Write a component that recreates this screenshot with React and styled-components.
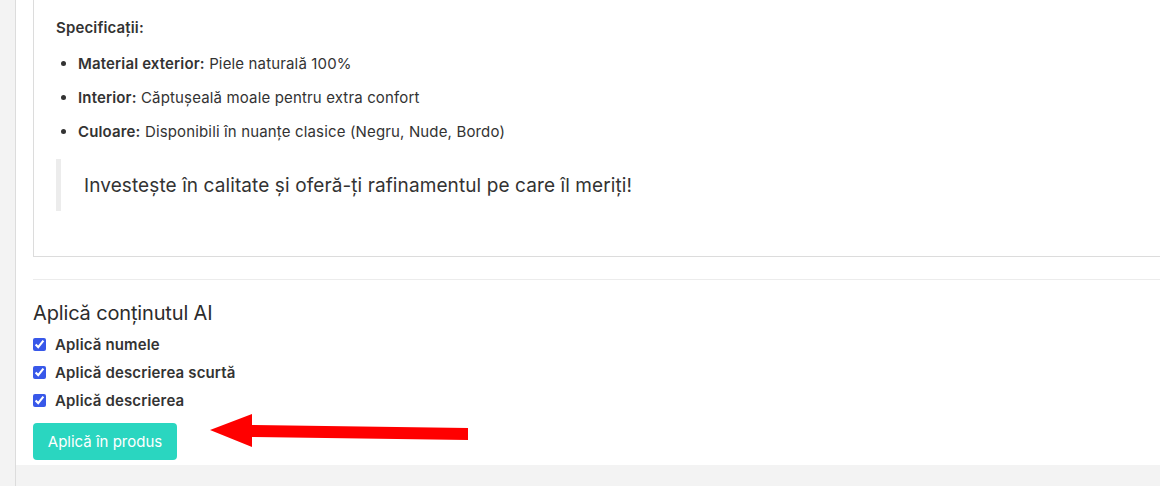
import React from "react";
import styled, { createGlobalStyle } from "styled-components";

const Global = createGlobalStyle`
  html, body { margin: 0; padding: 0; background: #f3f3f3; }
  body { font-family: Inter, "Noto Sans", sans-serif; color: #3c3c3c; }
  * { box-sizing: border-box; }
`;

const Page = styled.div`
  display: flex;
  width: 1160px;
  height: 486px;
  overflow: hidden;
  background: #f3f3f3;
`;

const Strip = styled.div`
  width: 16px;
  flex: none;
  background: #f3f3f3;
  border-right: 1px solid #dcdcdc;
`;

const Column = styled.div`
  flex: 1;
  display: flex;
  flex-direction: column;
  min-width: 0;
`;

const Panel = styled.div`
  position: relative;
  background: #fff;
  padding: 0 0 4px 17px;
  height: 465px;
  overflow: hidden;
`;

const EditorBox = styled.div`
  width: calc(100% + 40px);
  border-left: 1px solid #dcdcdc;
  border-bottom: 1px solid #dcdcdc;
  padding: 17px 22px 45px;
  font-size: 15px;
  line-height: 21px;
  letter-spacing: 0.15px;
  color: #333;
`;

const Para = styled.p`
  margin: 0 0 15px;
  font-weight: 600;
`;

const List = styled.ul`
  margin: 0 0 17px;
  padding-left: 22px;
  list-style: disc;
`;

const Item = styled.li`
  margin-bottom: 13px;
  &:last-child { margin-bottom: 0; }
  b { font-weight: 600; }
`;

const Quote = styled.blockquote`
  margin: 0;
  border-left: 5px solid #ececec;
  padding: 13px 0 12px 23px;
  font-size: 19px;
  line-height: 27px;
  letter-spacing: 0.1px;
  color: #333;
`;

const Divider = styled.hr`
  margin: 22px 0 0;
  width: calc(100% + 40px);
  border: none;
  border-top: 1px solid #ececec;
`;

const Heading = styled.h3`
  margin: 21px 0 9px;
  font-size: 20px;
  line-height: 24px;
  letter-spacing: -0.15px;
  font-weight: 400;
  color: #2c2c2c;
`;

const Checks = styled.div`
  display: flex;
  flex-direction: column;
  gap: 7px;
`;

const CheckRow = styled.label`
  display: flex;
  align-items: center;
  gap: 9px;
  font-size: 15px;
  line-height: 21px;
  letter-spacing: 0.15px;
  font-weight: 600;
  color: #333;
`;

const Box = styled.input`
  margin: 0;
  width: 13px;
  height: 13px;
  accent-color: #3858e9;
`;

const Button = styled.button`
  margin-top: 12px;
  width: 144px;
  height: 37px;
  border: none;
  border-radius: 4px;
  background: #2ad6c0;
  color: #fff;
  font-family: Inter, "Noto Sans", sans-serif;
  font-size: 15px;
  cursor: pointer;
`;

const Arrow = styled.svg`
  position: absolute;
  left: 178px;
  top: 410px;
`;

export default function App() {
  return (
    <>
      <Global />
      <Page>
        <Strip />
        <Column>
          <Panel>
            <EditorBox>
              <Para>Specificații:</Para>
              <List>
                <Item><b>Material exterior:</b> Piele naturală 100%</Item>
                <Item><b>Interior:</b> Căptușeală moale pentru extra confort</Item>
                <Item><b>Culoare:</b> Disponibili în nuanțe clasice (Negru, Nude, Bordo)</Item>
              </List>
              <Quote>Investește în calitate și oferă-ți rafinamentul pe care îl meriți!</Quote>
            </EditorBox>
            <Divider />
            <Heading>Aplică conținutul AI</Heading>
            <Checks>
              <CheckRow><Box type="checkbox" defaultChecked />Aplică numele</CheckRow>
              <CheckRow><Box type="checkbox" defaultChecked />Aplică descrierea scurtă</CheckRow>
              <CheckRow><Box type="checkbox" defaultChecked />Aplică descrierea</CheckRow>
            </Checks>
            <Button>Aplică în produs</Button>
            <Arrow width="280" height="45" viewBox="0 0 280 45">
              <polygon points="16,20 58,4 58,15 274,18 274,30 58,27 58,37" fill="#ff0000" />
            </Arrow>
          </Panel>
        </Column>
      </Page>
    </>
  );
}
